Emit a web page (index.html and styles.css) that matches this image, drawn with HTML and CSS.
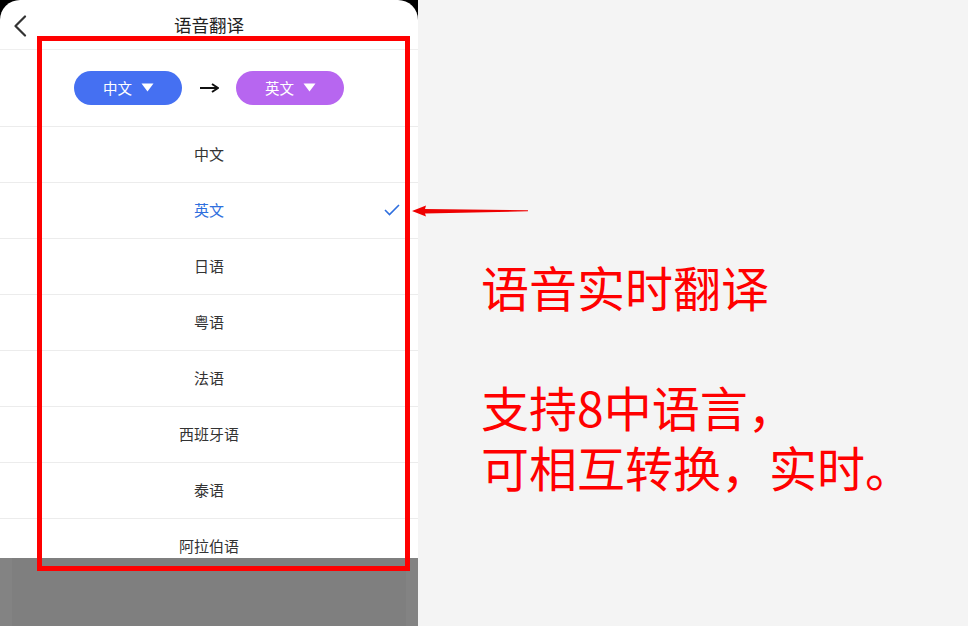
FILE: index.html
```html
<!DOCTYPE html>
<html lang="zh-CN">
<head>
<meta charset="utf-8">
<title>语音翻译</title>
<link rel="stylesheet" href="styles.css">
</head>
<body>
<div class="page">
  <div class="phone">
    <div class="sheet">
      <div class="header">
        <svg class="back" width="14" height="22" viewBox="0 0 14 22"><path d="M12 1.5 L2.5 11 L12 20.5" fill="none" stroke="#333" stroke-width="2.2" stroke-linecap="round" stroke-linejoin="round"/></svg>
        <div class="title">语音翻译</div>
        <div></div>
      </div>
      <div class="langrow">
        <div class="pill pill-blue"><span>中文</span><svg width="13" height="9" viewBox="0 0 13 9"><path d="M0.5 0.5 H12.5 L6.5 8.5 Z" fill="#fff"/></svg></div>
        <svg class="arrow" width="20" height="10" viewBox="0 0 20 10"><path d="M1 5 H18" stroke="#111" stroke-width="2"/><path d="M13 1 L19 5 L13 9" fill="none" stroke="#111" stroke-width="2"/></svg>
        <div class="pill pill-purple"><span>英文</span><svg width="13" height="9" viewBox="0 0 13 9"><path d="M0.5 0.5 H12.5 L6.5 8.5 Z" fill="#fff"/></svg></div>
      </div>
      <div class="list">
        <div class="row"><span class="label">中文</span></div>
        <div class="row selected"><span class="label">英文</span><svg class="check" width="16" height="12" viewBox="0 0 16 12"><path d="M1 6 L5.5 10.5 L15 1" fill="none" stroke="#2f6fde" stroke-width="1.6"/></svg></div>
        <div class="row"><span class="label">日语</span></div>
        <div class="row"><span class="label">粤语</span></div>
        <div class="row"><span class="label">法语</span></div>
        <div class="row"><span class="label">西班牙语</span></div>
        <div class="row"><span class="label">泰语</span></div>
        <div class="row"><span class="label">阿拉伯语</span></div>
      </div>
      <div class="mask"></div>
    </div>
    <div class="redbox"></div>
    <svg class="redarrow" width="120" height="14" viewBox="0 0 120 14"><polygon points="0,7 14,1.5 13,5 116,6.3 116,7.3 13,9.5 14,12.5" fill="#ee0000"/></svg>
  </div>
  <div class="notes">
    <div class="note-line">语音实时翻译</div>
    <div class="note-gap"></div>
    <p class="note-para">支持8中语言，<br>可相互转换，实时。</p>
  </div>
</div>
</body>
</html>
```
FILE: styles.css
```css
* { box-sizing: border-box; }
html, body { margin: 0; padding: 0; }
body {
  background: #f4f4f4;
  font-family: "Noto Sans CJK SC", "Noto Sans", sans-serif;
  width: 968px;
  height: 626px;
  overflow: hidden;
}
.page {
  display: flex;
  height: 626px;
}
.phone {
  position: relative;
  width: 418px;
  height: 626px;
  background: #000;
  flex: none;
}
.sheet {
  background: #fff;
  border-radius: 20px 20px 0 0;
  height: 626px;
  display: flex;
  flex-direction: column;
  overflow: hidden;
}
.header {
  height: 50px;
  border-bottom: 1px solid #efefef;
  display: grid;
  grid-template-columns: 1fr auto 1fr;
  align-items: center;
  padding: 0 13px;
  flex: none;
}
.back { display: block; margin-top: 2px; }
.title {
  font-size: 17.5px;
  color: #222;
  line-height: 1;
  margin-top: 1px;
}
.langrow {
  height: 77px;
  border-bottom: 1px solid #ececec;
  display: flex;
  align-items: center;
  justify-content: center;
  gap: 17px;
  flex: none;
  padding-right: 1px;
  padding-bottom: 1px;
}
.pill {
  width: 108px;
  height: 34px;
  border-radius: 17px;
  display: flex;
  align-items: center;
  justify-content: center;
  gap: 9px;
  color: #fff;
  font-size: 14.5px;
  padding-left: 2px;
}
.pill svg { display: block; }
.pill-blue { background: #4570f2; }
.pill-purple { background: #b766f0; }
.arrow { display: block; margin-top: 1px; }
.list {
  flex: 1;
  overflow: hidden;
}
.row {
  height: 56px;
  border-bottom: 1px solid #ececec;
  display: grid;
  grid-template-columns: 1fr auto 1fr;
  align-items: center;
  font-size: 15px;
  color: #333;
  padding: 0 18px 2px 18px;
}
.row .label { grid-column: 2; line-height: 1; }
.row.selected { color: #2f6fde; }
.check { grid-column: 3; justify-self: end; display: block; margin-top: 1px; }
.mask {
  height: 68px;
  flex: none;
  background: linear-gradient(to right, #838383 0, #838383 12px, #7f7f7f 12px, #7f7f7f 406px, #838383 406px);
}
.redbox {
  position: absolute;
  left: 37px;
  top: 36px;
  width: 373px;
  height: 535px;
  border: 5px solid #f00;
}
.redarrow {
  position: absolute;
  left: 412px;
  top: 204px;
  display: block;
}
.notes {
  flex: 1;
  padding-left: 63px;
  padding-top: 256px;
  color: #ff0000;
  font-size: 48px;
  font-family: "Noto Sans CJK SC", sans-serif;
}
.note-line {
  line-height: 60px;
  height: 60px;
  white-space: nowrap;
}
.note-gap { height: 60px; }
.note-para {
  margin: 0;
  line-height: 60px;
  white-space: nowrap;
}
```
